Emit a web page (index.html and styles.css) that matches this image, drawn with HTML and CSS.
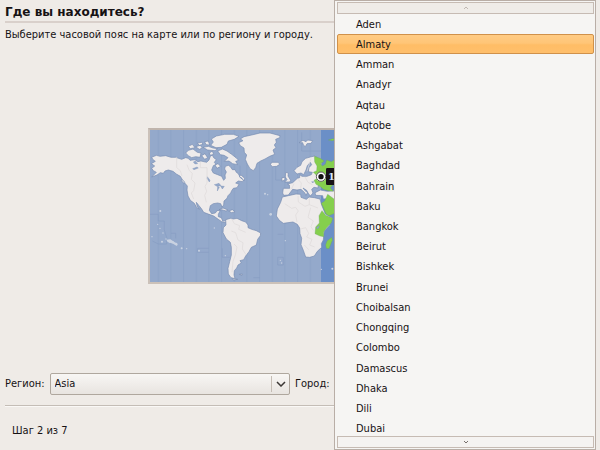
FILE: index.html
```html
<!DOCTYPE html>
<html lang="ru">
<head>
<meta charset="utf-8">
<title>Где вы находитесь?</title>
<link rel="stylesheet" href="styles.css">
</head>
<body>
<main class="installer">
  <h1 class="title">Где вы находитесь?</h1>
  <p class="hint">Выберите часовой пояс на карте или по региону и городу.</p>

  <div class="map-area">
    <svg class="map" viewBox="15 15 900 456" role="img" aria-label="Карта часовых поясов">
      <defs>
        <pattern id="zones" x="0" y="0" width="38" height="500" patternUnits="userSpaceOnUse">
          <path d="M2 0V500" stroke="#869dc3" stroke-width="2"/>
        </pattern>
      </defs>
      <rect x="12" y="9" width="916" height="468" fill="#94a9cb"/>
      <rect x="12" y="9" width="516" height="468" fill="url(#zones)"/>
      <rect x="528" y="9" width="50" height="468" fill="#6b8fc7"/>
      <g fill="none" stroke="#869dc3" stroke-width="2">
        <path d="M15 268H40V288H58V315L65 338V357H40L22 348M78 325H92V340M191 370H158V382H191M232 370V397H255M398 328H415M398 397H415V420H398V397M325 458H345M470 22V78H528M392 122V165H410M285 122V165"/>
      </g>
      <g class="land">
        <path d="M20 97L34 91 45 94 62 92 78 97 92 97 110 103 122 98 130 100 135 106 150 104 158 110 168 108 185 112 192 105 196 94 202 90 206 98 214 104 208 112 213 118 205 122 200 135 205 144 218 149 230 154 236 166 241 160 240 150 244 141 239 132 241 124 250 121 257 126 262 134 270 134 274 142 280 146 286 158 296 165 292 170 280 168 272 174 282 178 276 188 265 190 260 197 257 204 249 212 246 220 237 228 236 240 231 246 227 236 218 234 205 236 196 242 193 256 200 266 211 264 216 257 226 256 220 268 220 275 229 278 233 288 244 286 242 292 230 290 220 283 206 273 192 268 176 262 170 252 162 242 154 232 156 242 163 253 154 246 148 235 136 226 129 213 126 195 127 183 120 175 112 164 106 154 94 147 84 139 70 135 60 138 55 145 46 143 36 150 20 156 34 142 25 137 20 130 29 123 19 116 31 109 24 104Z"/>
        <path d="M122 84L130 76 144 72 157 82 168 84 165 97 152 95 140 98 130 92ZM130 64L142 58 150 68 136 71ZM152 65L166 61 172 69 163 73ZM170 92L180 86 188 98 179 103ZM193 84L202 78 206 88 196 91ZM174 67L190 64 204 69 218 71 210 77 188 75ZM157 54L170 52 174 58 163 61ZM179 50L190 48 194 60 183 59ZM197 61L205 51 199 42 214 33 239 28 265 28 282 34 268 43 250 48 246 58 229 67 213 68ZM218 78L232 72 246 78 260 88 273 98 281 106 272 109 278 119 263 116 252 108 238 109 249 98 237 91 226 89ZM210 120L219 116 227 124 216 130ZM291 160L282 154 288 150 299 160 297 168ZM112 165L120 172 117 175 108 166Z"/>
        <path d="M281 53L294 47 286 42 297 35 320 30 345 24 375 24 405 32 404 38 392 43 394 52 388 60 393 68 384 75 389 88 374 94 360 102 347 108 336 115 332 128 325 137 315 131 307 117 301 103 305 90 298 82 297 69 286 62Z"/>
        <path d="M242 284L256 280 265 282 276 280 290 287 302 291 309 300 309 308 320 313 334 317 347 324 346 332 338 343 334 360 319 367 312 380 302 393 296 404 285 407 289 414 279 420 275 429 268 437 267 450 270 461 258 458 250 447 249 430 254 410 259 390 259 367 256 352 244 342 234 323 235 308 243 300Z"/>
        <path d="M222 254L234 249 249 255 243 258 230 254ZM251 258L262 254 270 260 260 263ZM263 460L278 463 265 465ZM283 448L292 447 291 451ZM375 117L383 112 400 112 404 118 395 124 382 125Z"/>
        <path d="M462 53L474 46 483 50 488 45 503 47 498 55 486 56 481 65 475 60 473 53Z"/>
        <path d="M422 142L430 144 429 153 437 166 434 171 419 171 426 164 421 156ZM411 158L420 157 419 166 410 168Z"/>
        <path d="M447 137L456 127 467 121 471 110 482 100 496 96 509 93 519 99 530 110 528 178 520 180 519 189 507 187 500 193 504 204 496 213 489 204 485 196 474 189 482 199 488 202 483 211 479 203 468 193 456 195 443 193 437 201 430 210 416 211 413 204 415 190 434 190 433 180 427 177 443 173 457 160 464 158 464 149 471 154 486 154 499 149 502 142 490 140 492 128 500 119 496 112 487 122 483 135 476 149 468 144 456 147Z"/>
        <path d="M510 203L526 195 547 199 570 197 570 225 548 221 535 222 533 212 512 211Z"/>
        <path d="M412 216L430 212 453 207 467 208 468 217 484 223 492 216 508 218 525 222 530 240 541 267 563 280 553 302 538 318 536 332 535 345 529 356 530 367 517 379 508 393 494 397 482 396 475 376 468 359 470 340 465 326 464 309 457 298 444 291 415 295 403 286 394 273 397 252 407 232Z"/>
      </g>
      <g class="zone-land">
        <path d="M508 94L525 100 538 108 527 116 532 123 541 118 545 105 559 110 578 98 578 179 563 180 556 188 565 199 550 197 535 193 525 184 513 178 507 166 517 160 513 149 505 142 515 137 516 123 509 111ZM550 45L563 41 576 43 562 47Z"/>
        <path d="M548 208L559 216 578 230 578 261 552 272 543 267 536 250 529 235 539 228Z"/>
        <path d="M531 257L542 271 563 280 559 293 544 309 536 320 536 335 525 333 510 326 512 306 523 294 522 272Z"/>
        <path d="M546 348L560 337 562 346 552 371 544 370 542 360Z"/>
      </g>
      <g fill="#94a9cb" stroke="#748ab0" stroke-width="1">
        <path d="M143 131L156 126 160 129 147 134ZM145 111L151 108 158 116 150 117ZM187 155L195 166 193 171 186 160ZM208 179L222 175 228 182 216 184ZM218 184L223 187 217 198ZM227 183L238 184 232 192ZM515 307L523 302 521 309 516 312ZM500 170L507 170 503 174Z"/>
      </g>
      <g fill="none" stroke="#dedada" stroke-width="2">
        <path d="M95 96V128L106 137 111 153M126 119L133 137 142 145 139 163 150 174 146 197 139 204 146 222M166 110V128H186V174L180 184 185 199 179 211 184 232M260 281L268 296 284 302 281 313 302 322M259 318L272 323 279 345 294 353 292 372 303 389M267 357L276 366 271 390 264 409 261 442M419 236L440 250 452 247 460 258 452 270 456 291M459 213L460 231 480 244 493 239M493 219V239L519 249M497 248L489 277 505 288 498 305 505 316M467 312L482 308 491 325 485 336 501 343 494 360 509 366M478 360L491 374M439 193L447 176M459 163L469 174 467 190M480 156L489 172 502 179M486 139L498 101"/>
      </g>
      <g fill="#c9d2e1">
        <circle cx="46" cy="258" r="3"/><circle cx="38" cy="298" r="2"/><circle cx="45" cy="310" r="2"/><circle cx="54" cy="324" r="2"/><circle cx="21" cy="335" r="2"/><circle cx="51" cy="350" r="3"/><circle cx="63" cy="342" r="2"/><circle cx="74" cy="350" r="3"/><circle cx="84" cy="352" r="3"/><circle cx="93" cy="357" r="4"/><circle cx="110" cy="370" r="3"/><circle cx="125" cy="371" r="2"/><circle cx="162" cy="377" r="3"/><circle cx="208" cy="309" r="2"/><circle cx="241" cy="392" r="2"/><circle cx="377" cy="268" r="4"/><circle cx="421" cy="347" r="2"/><circle cx="406" cy="406" r="2"/><circle cx="410" cy="414" r="2"/><circle cx="360" cy="206" r="3"/><circle cx="368" cy="209" r="2"/><circle cx="529" cy="433" r="2"/><circle cx="562" cy="431" r="3"/>
        <path d="M64 344L76 343 87 350 98 357 96 363 84 356 68 351Z"/>
      </g>
      <circle cx="528" cy="155" r="15" fill="#fff"/>
      <circle cx="528" cy="155" r="14" fill="none" stroke="#181216" stroke-width="2"/>
      <circle cx="528" cy="155" r="8" fill="#111"/>
      <rect x="543" y="129" width="96" height="51" rx="4" fill="#181216"/>
      <text class="map-time" x="549" y="165">1</text>
    </svg>
  </div>

  <form class="location">
    <label for="region">Регион:</label>
    <span class="combo">
      <select id="region"><option>Asia</option></select>
      <svg class="combo-arrow" viewBox="0 0 10 6" aria-hidden="true"><path d="M1 1L5 5L9 1"/></svg>
    </span>
    <label for="city">Город:</label>
    <span class="combo">
      <select id="city"><option>Almaty</option></select>
    </span>
  </form>

  <footer class="step">Шаг 2 из 7</footer>
</main>

<div class="menu">
  <button class="scroll scroll-up" type="button" aria-label="Вверх" disabled>
    <svg viewBox="0 0 6 4" aria-hidden="true"><path d="M1 3L3 1L5 3"/></svg>
  </button>
  <div class="cities">
    <button class="city" type="button">Aden</button>
    <button class="city selected" type="button">Almaty</button>
    <button class="city" type="button">Amman</button>
    <button class="city" type="button">Anadyr</button>
    <button class="city" type="button">Aqtau</button>
    <button class="city" type="button">Aqtobe</button>
    <button class="city" type="button">Ashgabat</button>
    <button class="city" type="button">Baghdad</button>
    <button class="city" type="button">Bahrain</button>
    <button class="city" type="button">Baku</button>
    <button class="city" type="button">Bangkok</button>
    <button class="city" type="button">Beirut</button>
    <button class="city" type="button">Bishkek</button>
    <button class="city" type="button">Brunei</button>
    <button class="city" type="button">Choibalsan</button>
    <button class="city" type="button">Chongqing</button>
    <button class="city" type="button">Colombo</button>
    <button class="city" type="button">Damascus</button>
    <button class="city" type="button">Dhaka</button>
    <button class="city" type="button">Dili</button>
    <button class="city" type="button">Dubai</button>
  </div>
  <button class="scroll scroll-down" type="button" aria-label="Вниз">
    <svg viewBox="0 0 6 4" aria-hidden="true"><path d="M1 1L3 3L5 1"/></svg>
  </button>
</div>
</body>
</html>
```
FILE: styles.css
```css
* {
  box-sizing: border-box;
}

body {
  margin: 0;
  background: #efebe7;
  color: #161214;
  font: 11px/16px "DejaVu Sans Condensed", "DejaVu Sans", sans-serif;
}

button,
select {
  font: inherit;
  color: inherit;
}

.installer {
  display: flex;
  flex-direction: column;
  min-height: 100vh;
  padding: 4px 5px 0;
}

.title {
  margin: 0;
  padding-bottom: 1px;
  border-bottom: 2px solid #d9d0cb;
  font: bold 12px/16px "DejaVu Sans", sans-serif;
}

.hint {
  margin: 4px 0 0;
}

.map-area {
  display: flex;
  flex: 1;
  align-items: center;
  justify-content: center;
  padding-bottom: 4px;
}

.map {
  width: 304px;
  height: auto;
  border: 2px solid #cbc1b9;
  border-top-color: #bfb4ac;
}

.land {
  fill: #eeebeb;
  stroke: #758bb1;
  stroke-width: 2px;
}

.zone-land {
  fill: #85cf4d;
  stroke: #6ba164;
  stroke-width: 1px;
}

.map-time {
  fill: #d6e6ff;
  font: bold 30px "DejaVu Serif", serif;
}

.location {
  display: grid;
  grid-template-columns: auto 12fr auto 13fr;
  align-items: center;
  gap: 5px;
}

.combo {
  display: grid;
  align-items: center;
}

.combo > * {
  grid-area: 1 / 1;
}

.combo select {
  appearance: none;
  width: 100%;
  height: 22px;
  padding: 0 4px;
  border: 1px solid #afa79e;
  border-radius: 2px;
  background: linear-gradient(#f8f6f4, #f0edea 50%, #e8e4e0);
}

.combo-arrow {
  box-sizing: content-box;
  justify-self: end;
  width: 10px;
  height: 6px;
  padding: 5px 4px;
  border-left: 1px solid #c5bdb5;
  fill: none;
  stroke: #3b3735;
  stroke-width: 1.5px;
  pointer-events: none;
}

.step {
  margin-top: 10px;
  padding: 17px 7px 11px;
  border-top: 1px solid #c4bdb6;
  box-shadow: inset 0 1px #faf8f6;
}

.menu {
  position: absolute;
  top: 0;
  right: 4px;
  bottom: 0;
  left: 334px;
  display: flex;
  flex-direction: column;
  padding: 1px 1px 1px 2px;
  border: 1px solid #b9aea6;
  background: #f6f5f3;
}

.scroll {
  display: flex;
  flex: none;
  align-items: center;
  justify-content: center;
  height: 12px;
  padding: 0;
  border: 1px solid #c6bbb3;
  background: #f5f3f1;
}

.scroll svg {
  width: 6px;
  height: 4px;
  fill: none;
  stroke: #77706c;
}

.scroll-up {
  background: #efece8;
}

.scroll-up svg {
  stroke: #c0b9b3;
}

.scroll-down {
  z-index: 1;
}

.cities {
  display: grid;
  flex: 1;
  grid-auto-rows: 1fr;
  margin-bottom: -3px;
}

.city {
  min-height: 0;
  padding: 1px 18px 0;
  border: 1px solid transparent;
  border-radius: 2px;
  background: none;
  text-align: left;
  line-height: 16px;
}

.city.selected {
  border-color: #d0914a;
  background: linear-gradient(#ffcb83, #ffc577 45%, #ffbd66 55%, #ffbf6b);
}
```
